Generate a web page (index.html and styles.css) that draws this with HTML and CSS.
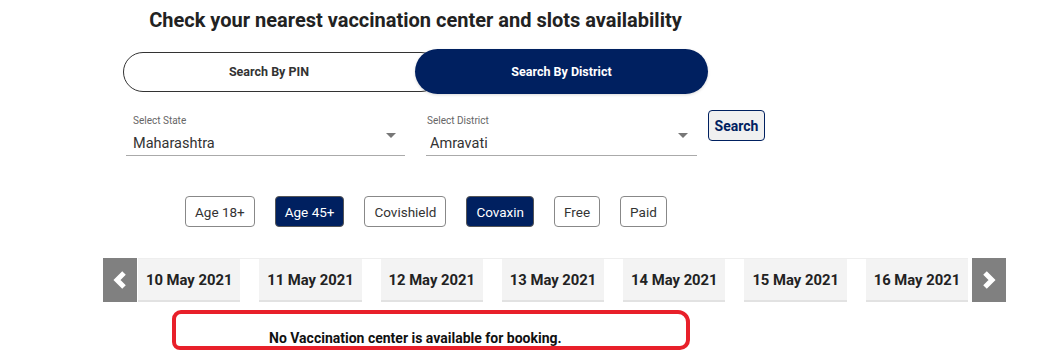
FILE: index.html
```html
<!DOCTYPE html>
<html lang="en">
<head>
    <meta charset="UTF-8">
    <meta name="viewport" content="width=device-width, initial-scale=1.0">
    <title>Check your nearest vaccination center</title>
    <link rel="stylesheet" href="styles.css">
</head>
<body>
    <div class="search-block">
        <h1 class="title">Check your nearest vaccination center and slots availability</h1>
        <div class="toggle">
            <button class="toggle-btn">Search By PIN</button>
            <button class="toggle-btn active">Search By District</button>
        </div>
    </div>

    <div class="select-row">
        <div class="field state">
            <span class="field-label">Select State</span>
            <span class="field-value">Maharashtra</span>
            <span class="caret"></span>
        </div>
        <div class="field district">
            <span class="field-label">Select District</span>
            <span class="field-value">Amravati</span>
            <span class="caret"></span>
        </div>
        <button class="search-btn">Search</button>
    </div>

    <div class="filters">
        <span class="chip">Age 18+</span>
        <span class="chip on">Age 45+</span>
        <span class="chip">Covishield</span>
        <span class="chip on">Covaxin</span>
        <span class="chip">Free</span>
        <span class="chip">Paid</span>
    </div>

    <div class="dates">
        <button class="arrow">
            <svg width="14" height="20" viewBox="0 0 14 20"><path d="M11 3 L4 10 L11 17" fill="none" stroke="#fff" stroke-width="5"/></svg>
        </button>
        <div class="date-list">
            <div class="date">10 May 2021</div>
            <div class="date">11 May 2021</div>
            <div class="date">12 May 2021</div>
            <div class="date">13 May 2021</div>
            <div class="date">14 May 2021</div>
            <div class="date">15 May 2021</div>
            <div class="date">16 May 2021</div>
        </div>
        <button class="arrow">
            <svg width="14" height="20" viewBox="0 0 14 20"><path d="M3 3 L10 10 L3 17" fill="none" stroke="#fff" stroke-width="5"/></svg>
        </button>
    </div>

    <div class="message">No Vaccination center is available for booking.</div>
</body>
</html>
```

FILE: styles.css
```css
body {
    margin: 0;
    font-family: Roboto, "Liberation Sans", sans-serif;
    background-color: #fff;
    color: #222;
}
button {
    font-family: inherit;
}
.search-block {
    margin-left: 123px;
    width: 585px;
}
.title {
    margin: 0;
    padding-top: 9px;
    font-size: 20px;
    font-weight: 700;
    text-align: center;
    color: #222;
    line-height: 23px;
}
.toggle {
    display: flex;
    align-items: center;
    margin-top: 17px;
    height: 45px;
}
.toggle-btn {
    font-size: 12.5px;
    font-weight: 700;
    color: #333;
    background: #fff;
    border: 1px solid #333;
    border-radius: 20px;
    height: 40px;
    width: 318px;
    padding: 0 26px 0 0;
    cursor: pointer;
}
.toggle-btn.active {
    width: 293px;
    height: 45px;
    margin-left: -26px;
    padding: 0;
    border: none;
    border-radius: 23px;
    background-color: #002060;
    color: #fff;
    box-shadow: 0 1px 3px rgba(0,0,0,0.15);
}
.select-row {
    display: flex;
    align-items: flex-start;
    margin: 16px 0 0 126px;
}
.field {
    position: relative;
    height: 46px;
    border-bottom: 1px solid #aaa;
    display: flex;
    flex-direction: column;
    box-sizing: border-box;
}
.field.state {
    width: 279px;
    padding-left: 7px;
}
.field.district {
    width: 271px;
    margin-left: 21px;
    padding-left: 1px;
}
.field.district .field-value {
    margin-left: 3px;
}
.field-label {
    font-size: 10px;
    color: #666;
    margin-top: 5px;
    line-height: 12px;
}
.field-value {
    font-size: 14.5px;
    color: #333;
    margin-top: 8px;
    line-height: 17px;
}
.caret {
    position: absolute;
    right: 9px;
    top: 23px;
    border-left: 5px solid transparent;
    border-right: 5px solid transparent;
    border-top: 5px solid #777;
}
.search-btn {
    margin-left: 11px;
    width: 57px;
    height: 31px;
    font-size: 14px;
    font-weight: 700;
    color: #002060;
    background-color: #f0f0f0;
    border: 1px solid #002060;
    border-radius: 4px;
    padding: 0;
    cursor: pointer;
}
.filters {
    display: flex;
    gap: 20px;
    margin: 40px 0 0 185px;
}
.chip {
    display: inline-flex;
    align-items: center;
    height: 31px;
    padding: 0 9px;
    box-sizing: border-box;
    font-size: 13.5px;
    color: #333;
    border: 1px solid #888;
    border-radius: 4px;
    background-color: #fff;
}
.chip.on {
    background-color: #002060;
    color: #fff;
    border-color: #555;
}
.dates {
    display: flex;
    margin: 31px 0 0 103px;
    height: 44px;
}
.arrow {
    width: 34px;
    height: 44px;
    background-color: #808080;
    border: none;
    padding: 0;
    display: flex;
    align-items: center;
    justify-content: center;
    flex-shrink: 0;
}
.date-list {
    display: flex;
    gap: 19px;
    margin: 0 4px 0 1px;
    border-top: 1px solid #eee;
}
.date {
    width: 102.3px;
    height: 43px;
    display: flex;
    align-items: center;
    justify-content: center;
    background-color: #f3f3f3;
    border-bottom: 2px solid #e2e2e2;
    box-sizing: border-box;
    font-size: 14.8px;
    font-weight: 700;
    color: #222;
}
.message {
    margin: 8px 0 0 172px;
    width: 518px;
    height: 40px;
    box-sizing: border-box;
    border: 4px solid #e8202a;
    border-radius: 9px 12px 10px 8px;
    padding: 16px 0 0 93px;
    font-size: 14px;
    font-weight: 700;
    color: #111;
    line-height: 16px;
}
```
